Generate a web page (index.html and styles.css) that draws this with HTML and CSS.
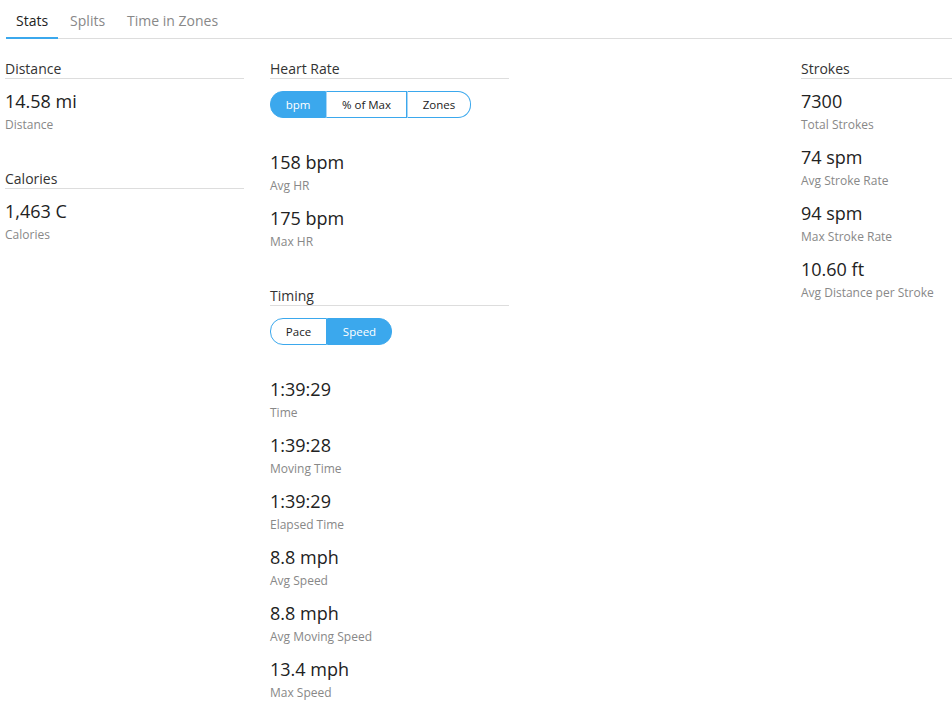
FILE: index.html
```html
<!DOCTYPE html>
<html lang="en">
<head>
    <meta charset="UTF-8">
    <title>Activity Stats</title>
    <link rel="stylesheet" href="styles.css">
</head>
<body>
    <nav class="tabs">
        <a class="tab activa">Stats</a>
        <a class="tab">Splits</a>
        <a class="tab">Time in Zones</a>
    </nav>

    <div class="stats-grid">
        <div class="columna">
            <section class="grupo">
                <h3 class="grupo-titulo">Distance</h3>
                <div class="dato">
                    <div class="valor">14.58 mi</div>
                    <div class="etiqueta">Distance</div>
                </div>
            </section>
            <section class="grupo">
                <h3 class="grupo-titulo">Calories</h3>
                <div class="dato">
                    <div class="valor">1,463 C</div>
                    <div class="etiqueta">Calories</div>
                </div>
            </section>
        </div>

        <div class="columna">
            <section class="grupo">
                <h3 class="grupo-titulo">Heart Rate</h3>
                <div class="botones">
                    <button class="boton activo ancho-bpm">bpm</button>
                    <button class="boton ancho-max">% of Max</button>
                    <button class="boton ancho-zonas">Zones</button>
                </div>
                <div class="dato">
                    <div class="valor">158 bpm</div>
                    <div class="etiqueta">Avg HR</div>
                </div>
                <div class="dato">
                    <div class="valor">175 bpm</div>
                    <div class="etiqueta">Max HR</div>
                </div>
            </section>
            <section class="grupo">
                <h3 class="grupo-titulo">Timing</h3>
                <div class="botones">
                    <button class="boton ancho-pace">Pace</button>
                    <button class="boton activo ancho-speed">Speed</button>
                </div>
                <div class="dato">
                    <div class="valor">1:39:29</div>
                    <div class="etiqueta">Time</div>
                </div>
                <div class="dato">
                    <div class="valor">1:39:28</div>
                    <div class="etiqueta">Moving Time</div>
                </div>
                <div class="dato">
                    <div class="valor">1:39:29</div>
                    <div class="etiqueta">Elapsed Time</div>
                </div>
                <div class="dato">
                    <div class="valor">8.8 mph</div>
                    <div class="etiqueta">Avg Speed</div>
                </div>
                <div class="dato">
                    <div class="valor">8.8 mph</div>
                    <div class="etiqueta">Avg Moving Speed</div>
                </div>
                <div class="dato">
                    <div class="valor">13.4 mph</div>
                    <div class="etiqueta">Max Speed</div>
                </div>
            </section>
        </div>

        <div class="columna"></div>

        <div class="columna">
            <section class="grupo">
                <h3 class="grupo-titulo">Strokes</h3>
                <div class="dato">
                    <div class="valor">7300</div>
                    <div class="etiqueta">Total Strokes</div>
                </div>
                <div class="dato">
                    <div class="valor">74 spm</div>
                    <div class="etiqueta">Avg Stroke Rate</div>
                </div>
                <div class="dato">
                    <div class="valor">94 spm</div>
                    <div class="etiqueta">Max Stroke Rate</div>
                </div>
                <div class="dato">
                    <div class="valor">10.60 ft</div>
                    <div class="etiqueta">Avg Distance per Stroke</div>
                </div>
            </section>
        </div>
    </div>
</body>
</html>
```

FILE: styles.css
```css
body {
    font-family: 'Open Sans', 'Liberation Sans', sans-serif;
    background-color: #fff;
    color: #222;
    margin: 0;
    padding: 0 0 0 5px;
    overflow: hidden;
}

/* Pestañas superiores */
.tabs {
    display: flex;
    border-bottom: 1px solid #ddd;
    margin-left: 1px;
    height: 39px;
    box-sizing: border-box;
}

.tab {
    font-size: 14px;
    color: #888;
    padding: 11px 10px 0 10px;
    margin-right: 2px;
    line-height: 20px;
    cursor: pointer;
}

.tab.activa {
    color: #222;
    border-bottom: 2px solid #3ba8ed;
    margin-bottom: -1px;
}

/* Rejilla de columnas */
.stats-grid {
    display: grid;
    grid-template-columns: 239px 239px 240px 239px;
    column-gap: 26px;
    padding-top: 20px;
}

.grupo {
    margin-bottom: 35px;
}

.grupo-titulo {
    font-size: 14px;
    font-weight: normal;
    color: #333;
    line-height: 18px;
    margin: 0 0 10px 0;
    padding-top: 1px;
    border-bottom: 1px solid #ddd;
}

.dato {
    margin-bottom: 11px;
}

.valor {
    font-size: 18px;
    line-height: 24px;
    color: #222;
    margin-bottom: 3px;
}

.etiqueta {
    font-size: 12px;
    line-height: 18px;
    color: #888;
}

/* Botones de unidades */
.botones {
    display: flex;
    margin: 12px 0 32px 0;
    height: 27px;
}

.boton {
    font-family: 'Open Sans', 'Liberation Sans', sans-serif;
    font-size: 11.5px;
    color: #222;
    background: #fff;
    border: 1px solid #3ba8ed;
    border-left: none;
    padding: 0;
    height: 27px;
    cursor: pointer;
}

.boton + .boton {
    border-left: 1px solid #a9d6f5;
}

.boton:first-child {
    border-left: 1px solid #3ba8ed;
    border-radius: 13px 0 0 13px;
}

.boton:last-child {
    border-radius: 0 13px 13px 0;
}

.boton.activo {
    background-color: #3ba8ed;
    color: #fff;
    border-color: #3ba8ed;
}

.ancho-bpm { width: 56px; }
.ancho-max { width: 81px; }
.ancho-zonas { width: 64px; }
.ancho-pace { width: 57px; }
.ancho-speed { width: 65px; }
```
